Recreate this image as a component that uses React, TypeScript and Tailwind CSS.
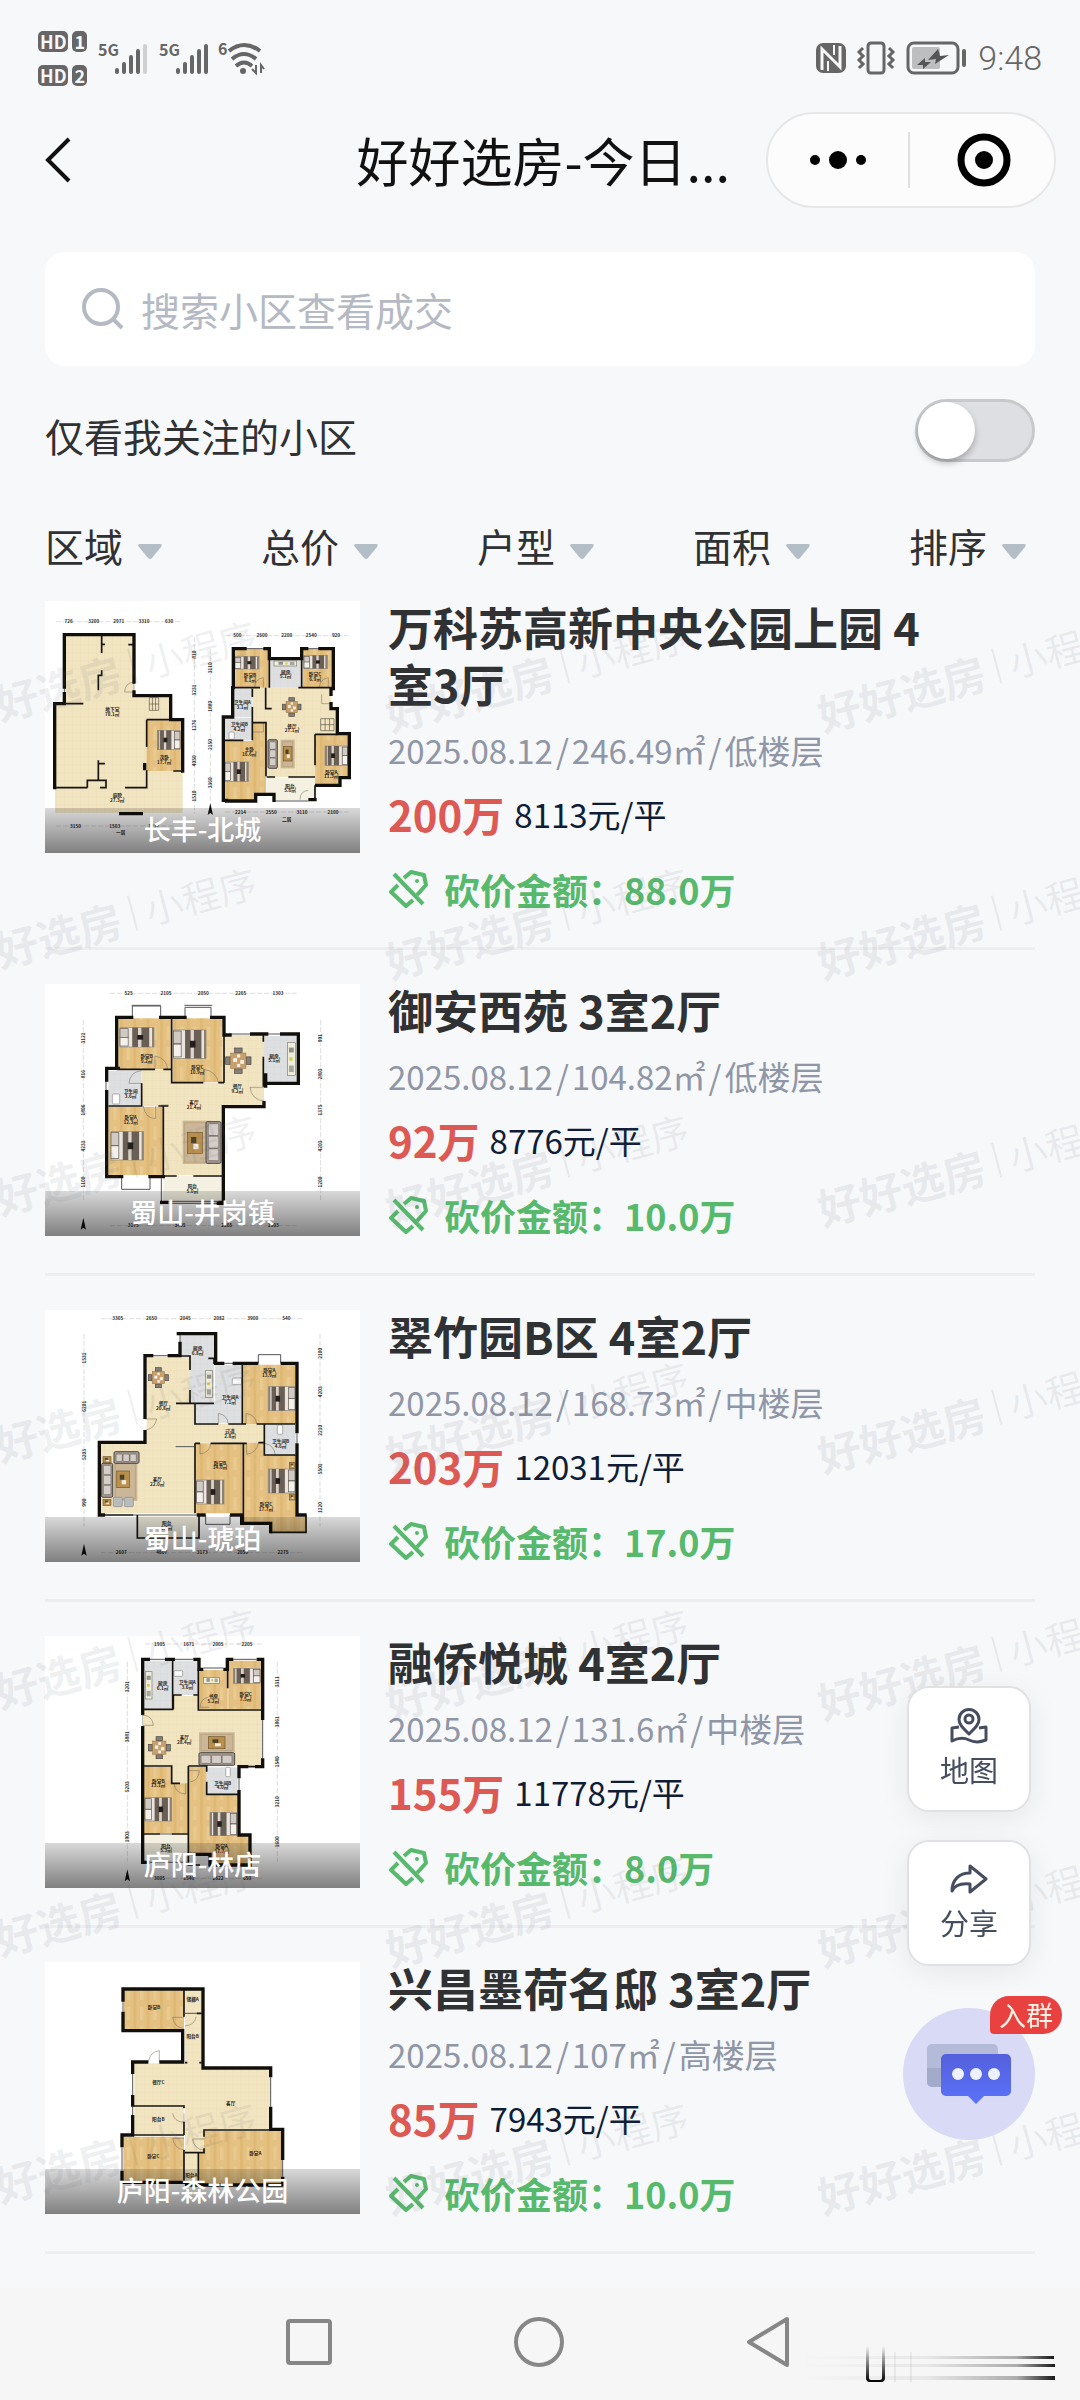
import { useState } from 'react';

type Fill = 'wood' | 'cream' | 'tile' | 'pale';
type Item =
    | ['bed', number, number, number, number, 'l' | 'r']
    | ['rug' | 'sofa' | 'counter' | 'wc' | 'stairs' | 'seat' | 'table', number, number, number, number]
    | ['dining', number, number, number];

interface Plan {
    viewBox: string;
    rooms: [Fill, string][];
    walls: string;
    partitions: string;
    windows: string;
    doors: string;
    items: Item[];
    labels: [number, number, string, string?][];
    // 尺寸标注: 上 / 下的横线, 左 / 右的竖线
    dimsH: [number, number, number, string[]][];
    dimsV: [number, number, number, string[]][];
    north?: [number, number];
}

interface Listing {
    title: string;
    district: string;
    area: string;
    floor: string;
    price: string;
    unit: string;
    cut: string;
    plan: Plan;
}

const fills: Record<Fill, string> = {
    wood: 'url(#wood)',
    cream: 'url(#cream)',
    tile: 'url(#tile)',
    pale: '#f4f1e2',
};

const planBeicheng: Plan = {
    viewBox: '135 62 945 756',
    rooms: [
        ['cream', 'M193 163H402V345H512V418H548V697H165V370H193Z'],
        ['wood', 'M440 420H548V572H440Z'],
        ['cream', 'M758 322H993V385H1012V462H945V590H800V425H758Z'],
        ['wood', 'M700 205H806V322H700Z'],
        ['wood', 'M908 205H1000V322H908Z'],
        ['tile', 'M810 235H905V322H810Z'],
        ['tile', 'M700 325H757V410H700Z'],
        ['tile', 'M675 412H757V480H675Z'],
        ['wood', 'M675 482H757V427H798V640H765V660H675Z'],
        ['wood', 'M945 462H1048V592H1020V612H945Z'],
        ['pale', 'M800 592H945V660H820V640H800Z'],
    ],
    walls: 'M193 320V163H402V305M402 335V346H512V418H548V572M193 340V370H165M164 370V622M362 700H424M434 553V565M700 322V205H735M795 205H808V235H905V205H920M960 205H1000V325H993V342M993 370V385H1012V460H1048V592H1020V615H950M698 322V410H670V660H680M680 662H767V642H822V660M930 658H945',
    partitions: 'M193 370H250M305 163V218M305 192H315M305 270V285H295V330M385 193H402M440 418V500M440 418H512M295 540V600M295 550H315M262 622V600H318V622H300M165 622H262M375 622H440V570M520 572H548M700 322H780M808 235V322M905 235V322M757 325V350M757 380V480M675 480H730M757 427H798V588M797 322V385H815M895 322H1000M945 462V555M945 462H1012M945 615V655M800 590H825M865 590H945',
    windows: 'M735 205H795M920 205H960M820 662H925M193 320V340',
    doors: 'M402 305V335H374Q374 308 402 305M790 322V292Q766 296 764 320M985 322V292Q960 296 958 320M993 370H965V342M757 455H790V427M900 658Q900 632 925 630',
    items: [
        ['bed', 472, 450, 68, 58, 'r'],
        ['stairs', 448, 352, 28, 38],
        ['bed', 705, 228, 72, 38, 'l'],
        ['bed', 912, 225, 70, 40, 'l'],
        ['bed', 675, 545, 70, 58, 'l'],
        ['bed', 975, 497, 68, 58, 'r'],
        ['counter', 822, 242, 68, 15],
        ['dining', 875, 380, 28],
        ['rug', 842, 478, 42, 86],
        ['table', 850, 498, 26, 44],
        ['sofa', 804, 478, 28, 86],
        ['wc', 687, 455, 16, 22],
        ['stairs', 962, 415, 40, 36],
    ],
    labels: [
        [337, 392, '地下室', '78.1㎡'], [493, 537, '次卧', '17.7㎡'], [352, 650, '庭院', '27.3㎡'],
        [750, 290, '卧室B', '8.1㎡'], [857, 280, '厨房', '5.1㎡'], [945, 288, '卧室C', '6.9㎡'],
        [727, 372, '卫生间A', '3.1㎡'], [718, 438, '卫生间B', '4.2㎡'], [876, 442, '餐厅', '27.1㎡'],
        [748, 512, '主卧', '16.6㎡'], [994, 580, '卧室A', '11.3㎡'], [870, 622, '阳台', '5.6㎡'],
        [860, 722, '二层'], [362, 762, '一层'],
    ],
    dimsH: [
        [124, 168, 545, ['726', '3200', '2971', '3310', '630']],
        [166, 675, 1045, ['500', '2600', '2200', '2540', '920']],
        [737, 168, 520, ['3150', '1503', '1237']],
        [695, 675, 1045, ['2214', '2550', '3110', '2100']],
    ],
    dimsV: [
        [583, 170, 700, ['810', '3231', '1276', '4050', '1510']],
        [631, 205, 665, ['3110', '1880', '2150', '3360']],
    ],
    north: [631, 690],
};

const planJinggang: Plan = {
    viewBox: '135 72 945 756',
    rooms: [
        ['wood', 'M355 175H515V327H355Z'],
        ['wood', 'M518 175H668V367H518Z'],
        ['cream', 'M672 225H792V438H672Z'],
        ['tile', 'M792 228H890V370H792Z'],
        ['tile', 'M325 332H425V436H325Z'],
        ['cream', 'M425 328H515V368H672V438H665V645H490V438H425Z'],
        ['wood', 'M325 440H490V645H325Z'],
        ['pale', 'M490 648H667V728H490Z'],
    ],
    walls: 'M350 325V172H395M482 172H555M635 172H672V225H690M755 222H800M845 222H895V370H797M797 345V378M792 428V440H670V730H655M320 360V325H355M320 395V650H365M450 650H490M485 727H500M660 727H672',
    partitions: 'M350 328H465M490 328H515M515 172V368H610M655 368H672M672 225V368M790 225V245M790 290V380M425 370V438H325M475 438H505M490 438V648H530M580 648H670',
    windows: 'M397 172V138H482V172M395 136H482M555 172V142H633V172M553 136H637M365 650V688H450V650M318 360V395M484 655V725M505 724H655M505 730H655M690 222H755M800 222H845',
    doors: 'M465 328V288Q500 295 503 328M612 368V328Q650 335 655 368M425 370H387Q390 335 425 332M430 438Q435 475 467 476V438M793 382H750Q755 420 793 423M483 435H506',
    items: [
        ['bed', 360, 203, 102, 58, 'l'],
        ['bed', 520, 210, 98, 85, 'l'],
        ['bed', 333, 515, 98, 85, 'l'],
        ['rug', 548, 482, 85, 130],
        ['table', 562, 517, 45, 63],
        ['sofa', 618, 485, 45, 125],
        ['dining', 715, 302, 38],
        ['counter', 862, 248, 24, 98],
        ['wc', 337, 402, 22, 30],
    ],
    labels: [
        [440, 294, '卧室B', '9.2㎡'], [592, 327, '卧室C', '10.9㎡'], [822, 293, '厨房', '5.1㎡'],
        [712, 384, '餐厅', '9.2㎡'], [582, 432, '客厅', '21.4㎡'], [392, 400, '卫生间', '3.6㎡'],
        [392, 477, '卧室A', '12.3㎡'], [577, 684, '阳台', '5.0㎡'],
    ],
    dimsH: [
        [100, 330, 890, ['525', '2105', '2050', '2265', '1303']],
        [797, 330, 890, ['3175', '3405', '2265', '1303']],
    ],
    dimsV: [
        [250, 180, 720, ['3121', '816', '1806', '4231', '1100']],
        [962, 180, 720, ['991', '2803', '1375', '4203', '1200']],
    ],
    north: [250, 795],
};

const planHupo: Plan = {
    viewBox: '135 60 945 756',
    rooms: [
        ['tile', 'M540 132H642V340H570V200H540Z'],
        ['cream', 'M440 200H570V340H585V402H793V458H585V670H302V460H440Z'],
        ['tile', 'M645 225H727V400H587V342H645Z'],
        ['wood', 'M730 224H888V402H730Z'],
        ['tile', 'M795 405H887V495H795Z'],
        ['wood', 'M587 460H728V670H587Z'],
        ['wood', 'M732 458H795V495H887V680H915V726H812V700H732Z'],
        ['pale', 'M412 677H597V744H412Z'],
    ],
    walls: 'M435 382V197H455M508 197H540V160M535 131H647V220H668M703 220H770M847 220H891V425M891 465V675H915M435 425V457H298V675H310M595 675H612M695 675H725V700H812V725',
    partitions: 'M540 198H570V240M570 300V340M625 205H642M528 340H642M642 205V222M585 340V402H655M685 402H738M727 225V402M770 402H885M793 402V495H887M585 460H600M632 460H740M775 458H793M585 460V670M730 460V700M300 675H400M412 675V744H597V675M918 675V727H810',
    windows: 'M775 220V194H842V220M617 675V703H690V675M455 197H508M670 220H703M540 131V160M400 675H590M527 470H583M891 430V460',
    doors: 'M435 387H470Q465 415 438 420M655 402V370Q682 375 685 402M738 402V370Q768 375 770 402M600 460V492Q630 488 632 460M740 460V493Q770 488 775 460M795 460Q822 465 826 495',
    items: [
        ['dining', 475, 263, 30],
        ['counter', 616, 242, 22, 80],
        ['wc', 697, 264, 28, 20],
        ['wc', 832, 405, 16, 28],
        ['bed', 805, 290, 80, 72, 'r'],
        ['bed', 805, 537, 80, 72, 'r'],
        ['bed', 590, 570, 82, 72, 'l'],
        ['rug', 340, 515, 72, 118],
        ['table', 350, 543, 38, 50],
        ['sofa', 342, 485, 75, 35],
        ['sofa', 305, 520, 33, 102],
        ['seat', 340, 622, 27, 28],
        ['seat', 373, 622, 27, 28],
        ['table', 309, 500, 24, 18],
        ['table', 309, 628, 24, 18],
        ['table', 868, 517, 17, 18],
        ['table', 868, 612, 17, 18],
    ],
    labels: [
        [593, 180, '厨房', '6.8㎡'], [490, 346, '餐厅', '20.8㎡'], [690, 328, '卫生间A', '7.1㎡'],
        [808, 247, '卧室A', '13.9㎡'], [690, 430, '过道', '2.8㎡'], [842, 460, '卫生间B', '4.6㎡'],
        [472, 574, '客厅', '22.0㎡'], [660, 524, '卧室B', '14.0㎡'], [798, 648, '卧室C', '17.7㎡'],
        [500, 706, '阳台', '6.0㎡'],
    ],
    dimsH: [
        [86, 303, 910, ['3305', '2650', '2045', '2082', '3900', '540']],
        [788, 303, 910, ['2607', '4607', '3173', '2050', '2275']],
    ],
    dimsV: [
        [252, 132, 710, ['1531', '6201', '5203', '990']],
        [960, 132, 710, ['2100', '4203', '2210', '5501', '1220']],
    ],
    north: [252, 783],
};

const planLindian: Plan = {
    viewBox: '135 48 945 756',
    rooms: [
        ['tile', 'M430 122H518V268H430Z'],
        ['tile', 'M522 122H594V225H522Z'],
        ['wood', 'M597 150H683V268H597Z'],
        ['wood', 'M685 122H785V268H685Z'],
        ['cream', 'M430 270H520V228H595V270H787V438H565V490H515V438H430Z'],
        ['wood', 'M430 440H515V490H565V640H430Z'],
        ['wood', 'M567 440H620V523H715V648H750V735H630V700H567Z'],
        ['tile', 'M620 442H713V522H620Z'],
        ['pale', 'M430 645H563V728H430Z'],
        ['tile', 'M567 706H628V735H567Z'],
    ],
    walls: 'M428 280V118H445M500 118H520M585 118H597V148H605M675 148H682V118H695M775 118H788V295M788 420V440H770M740 440H717V470M717 515V645H750V735H630V703H567M428 323V727H445',
    partitions: 'M518 120V268H430M520 225V268M520 225H545M580 225H595M595 145V270H788M683 150V205M430 438H515V490H540M565 438H620V455M620 485V523H715M565 438V700M430 642H480M515 642H565V735H600M765 440H720',
    windows: 'M450 118H495M525 118H580M610 144H670M700 118H770M788 300V415M717 475V510M480 642H515M450 727H563',
    doors: 'M428 285V316H460Q458 288 428 285M600 262Q602 235 625 232M600 262H628M567 452H598Q596 482 570 486M557 490V522Q525 520 522 490',
    items: [
        ['counter', 436, 155, 20, 82],
        ['wc', 522, 152, 26, 17],
        ['counter', 610, 172, 48, 18],
        ['bed', 700, 145, 80, 45, 'r'],
        ['rug', 597, 337, 107, 60],
        ['table', 625, 350, 50, 36],
        ['sofa', 597, 398, 107, 38],
        ['dining', 478, 383, 33],
        ['wc', 677, 442, 14, 28],
        ['bed', 435, 533, 80, 70, 'l'],
        ['bed', 630, 577, 80, 70, 'r'],
    ],
    labels: [
        [488, 195, '厨房', '6.1㎡'], [562, 192, '卫生间A', '3.6㎡'], [640, 235, '书房', '5.2㎡'],
        [737, 228, '卧室C', '7.5㎡'], [553, 357, '客厅', '28.4㎡'], [475, 488, '卧室B', '13.1㎡'],
        [668, 494, '卫生间B', '4.0㎡'], [665, 684, '卧室A', '17.7㎡'], [498, 683, '阳台', '5.3㎡'],
    ],
    dimsH: [
        [72, 435, 785, ['1905', '1671', '2005', '2205']],
        [775, 435, 785, ['3005', '1540', '2622', '650']],
    ],
    dimsV: [
        [382, 125, 725, ['3201', '3881', '5203', '1903']],
        [832, 125, 725, ['3311', '3861', '1540', '3210', '1600']],
    ],
    north: [382, 770],
};

const planForest: Plan = {
    viewBox: '135 66 945 756',
    rooms: [
        ['wood', 'M372 150H552V267H372Z'],
        ['cream', 'M555 150H605V372H555Z'],
        ['cream', 'M403 370H605V388H812V570H612V638H555V500H403Z'],
        ['cream', 'M403 502H551V584H403Z'],
        ['wood', 'M370 590H552V726H370Z'],
        ['wood', 'M597 640H612V572H846V732H597Z'],
        ['cream', 'M555 640H593V730H555Z'],
    ],
    walls: 'M369 180V147H609V384H812V407M369 220V272H548V366H483M440 366H398V397M398 470V495M398 530V578M812 505V568H848V655M366 617V585H398M366 697V727H560M560 735H848V715',
    partitions: 'M552 150V230M590 220H605M400 498H552V505M552 545V585M400 585H552M552 630V725M555 638H612V625M612 590V570H812M595 640V725M555 368H562M598 368H605',
    windows: 'M369 185V215M398 402V465M398 500V525M812 412V500M366 622V692M848 660V710M555 220H590',
    doors: 'M445 366Q450 335 478 332V366M552 232H518Q522 262 550 265M555 258Q585 255 588 230M518 520Q522 545 552 547V520M552 595H518Q522 625 552 630M612 597H578Q582 628 612 630',
    items: [],
    labels: [
        [462, 207, '卧室B'], [578, 183, '储藏A'], [578, 293, '阳台B'], [475, 433, '餐厅C'],
        [692, 496, '客厅'], [475, 542, '阳台B'], [460, 654, '卧室C'], [766, 645, '卧室A'], [574, 710, '阳台A'],
    ],
    dimsH: [],
    dimsV: [],
};

const listings: Listing[] = [
    { title: '万科苏高新中央公园上园 4室3厅', district: '长丰-北城', area: '246.49㎡', floor: '低楼层', price: '200万', unit: '8113元/平', cut: '88.0万', plan: planBeicheng },
    { title: '御安西苑 3室2厅', district: '蜀山-井岗镇', area: '104.82㎡', floor: '低楼层', price: '92万', unit: '8776元/平', cut: '10.0万', plan: planJinggang },
    { title: '翠竹园B区 4室2厅', district: '蜀山-琥珀', area: '168.73㎡', floor: '中楼层', price: '203万', unit: '12031元/平', cut: '17.0万', plan: planHupo },
    { title: '融侨悦城 4室2厅', district: '庐阳-林店', area: '131.6㎡', floor: '中楼层', price: '155万', unit: '11778元/平', cut: '8.0万', plan: planLindian },
    { title: '兴昌墨荷名邸 3室2厅', district: '庐阳-森林公园', area: '107㎡', floor: '高楼层', price: '85万', unit: '7943元/平', cut: '10.0万', plan: planForest },
];

const filters = ['区域', '总价', '户型', '面积', '排序'];

// 所有户型图共用的填充纹理
function PlanPatterns() {
    return (
        <svg className="absolute h-0 w-0" aria-hidden="true">
            <defs>
                <pattern id="wood" width="40" height="60" patternUnits="userSpaceOnUse">
                    <rect width="40" height="60" fill="#e4c182" />
                    <rect width="9" height="60" fill="#dfb974" />
                    <rect x="20" y="20" width="10" height="40" fill="#e9ca8f" />
                </pattern>
                <pattern id="cream" width="24" height="24" patternUnits="userSpaceOnUse">
                    <rect width="24" height="24" fill="#f1e4c0" />
                    <path d="M0 0H24M0 0V24" stroke="#ebdcb4" strokeWidth="2" />
                </pattern>
                <pattern id="tile" width="20" height="20" patternUnits="userSpaceOnUse">
                    <rect width="20" height="20" fill="#dedfe0" />
                    <path d="M0 0H20M0 0V20" stroke="#d3d5d6" strokeWidth="2" />
                </pattern>
            </defs>
        </svg>
    );
}

function Furniture({ item }: { item: Item }) {
    if (item[0] === 'dining') {
        const [, x, y, r] = item;
        return (
            <g>
                <g fill="#857f78" stroke="#4a4540" strokeWidth="2">
                    <rect x={x - r * 0.3} y={y - r} width={r * 0.6} height={r * 0.35} />
                    <rect x={x - r * 0.3} y={y + r * 0.65} width={r * 0.6} height={r * 0.35} />
                    <rect x={x - r} y={y - r * 0.3} width={r * 0.35} height={r * 0.6} />
                    <rect x={x + r * 0.65} y={y - r * 0.3} width={r * 0.35} height={r * 0.6} />
                </g>
                <rect x={x - r * 0.6} y={y - r * 0.6} width={r * 1.2} height={r * 1.2} fill="#c9a06a" stroke="#8a6a40" strokeWidth="1.5" />
                <g fill="#f4efe6">
                    <rect x={x - r * 0.4} y={y - r * 0.2} width={r * 0.3} height={r * 0.3} />
                    <rect x={x + r * 0.15} y={y - r * 0.05} width={r * 0.3} height={r * 0.3} />
                    <rect x={x - r * 0.1} y={y - r * 0.5} width={r * 0.25} height={r * 0.25} />
                    <rect x={x - r * 0.1} y={y + r * 0.25} width={r * 0.25} height={r * 0.25} />
                </g>
            </g>
        );
    }
    const [kind, x, y, w, h] = item;
    if (kind === 'bed') {
        const left = item[5] === 'l';
        const pillow = left ? x : x + w * 0.76;
        const blanket = left ? x + w * 0.36 : x + w * 0.12;
        return (
            <g>
                <rect x={x} y={y} width={w} height={h} fill="#e9e4de" stroke="#8d8378" strokeWidth="2" />
                <rect x={pillow} y={y + 3} width={w * 0.24} height={h * 0.45} fill="#cfcac4" stroke="#5b544d" strokeWidth="2" />
                <rect x={pillow} y={y + h * 0.5} width={w * 0.24} height={h * 0.45} fill="#f4f1ed" stroke="#5b544d" strokeWidth="2" />
                <rect x={blanket} y={y} width={w * 0.5} height={h} fill="#6a5f55" />
                <rect x={blanket + w * 0.17} y={y} width={w * 0.1} height={h} fill="#ddd5cb" />
                <rect x={blanket + w * 0.15} y={y + h * 0.38} width={w * 0.17} height={h * 0.24} fill="#221e1b" />
                <rect x={left ? x + w - 6 : x} y={y} width="6" height={h} fill="#8b8177" />
            </g>
        );
    }
    if (kind === 'rug') {
        return (
            <g>
                <rect x={x} y={y} width={w} height={h} fill="#cbb797" />
                <rect x={x + 6} y={y + 6} width={w - 12} height={h - 12} fill="none" stroke="#baa482" strokeWidth="3" />
            </g>
        );
    }
    if (kind === 'table') {
        return (
            <g>
                <rect x={x} y={y} width={w} height={h} fill="#b98f4d" stroke="#6f5730" strokeWidth="2" />
                <rect x={x + w * 0.25} y={y + h * 0.22} width={w * 0.35} height={h * 0.3} fill="#4b4227" />
                <rect x={x + w * 0.4} y={y + h * 0.55} width={w * 0.35} height={h * 0.25} fill="#f3ece1" />
            </g>
        );
    }
    if (kind === 'sofa') {
        const tall = h > w;
        return (
            <g>
                <rect x={x} y={y} width={w} height={h} rx="4" fill="#a39a92" stroke="#4f4943" strokeWidth="3" />
                {[0, 1, 2].map((n) => (
                    <rect
                        key={n}
                        x={tall ? x + w * 0.15 : x + 6 + (n * (w - 12)) / 3}
                        y={tall ? y + 6 + (n * (h - 12)) / 3 : y + h * 0.2}
                        width={tall ? w * 0.7 : (w - 18) / 3}
                        height={tall ? (h - 18) / 3 : h * 0.65}
                        rx="3"
                        fill="#d4cdc8"
                        stroke="#6b645e"
                        strokeWidth="2"
                    />
                ))}
            </g>
        );
    }
    if (kind === 'counter') {
        const tall = h > w;
        return (
            <g>
                <rect x={x} y={y} width={w} height={h} fill="#efeedd" stroke="#7d7b6c" strokeWidth="2" />
                <rect x={x + w * 0.2} y={y + h * 0.15} width={tall ? w * 0.6 : w * 0.2} height={tall ? h * 0.15 : h * 0.6} fill="#8f9088" />
                <rect x={x + w * (tall ? 0.25 : 0.5)} y={y + h * (tall ? 0.45 : 0.3)} width={tall ? w * 0.4 : w * 0.1} height={tall ? h * 0.1 : h * 0.4} fill="#d6c84f" />
                <rect x={x + w * (tall ? 0.2 : 0.7)} y={y + h * (tall ? 0.7 : 0.2)} width={tall ? w * 0.6 : w * 0.2} height={tall ? h * 0.2 : h * 0.6} fill="#a5a69d" />
            </g>
        );
    }
    if (kind === 'stairs') {
        return (
            <path
                d={`M${x} ${y}H${x + w}V${y + h}H${x}ZM${x} ${y + h / 2}H${x + w}M${x + w / 3} ${y}V${y + h}M${x + (w * 2) / 3} ${y}V${y + h}`}
                fill="none"
                stroke="#5d564a"
                strokeWidth="2"
            />
        );
    }
    return <rect x={x} y={y} width={w} height={h} rx="3" fill={kind === 'wc' ? '#fbfbfb' : '#b9bcbc'} stroke="#8b8d8d" strokeWidth="2" />;
}

function FloorPlan({ plan, name }: { plan: Plan; name: string }) {
    return (
        <svg viewBox={plan.viewBox} className="block w-full" role="img" aria-label={`${name} 户型图`}>
            {plan.rooms.map(([fill, d]) => (
                <path key={d} d={d} fill={fills[fill]} />
            ))}
            {plan.items.map((item, i) => (
                <Furniture key={i} item={item} />
            ))}
            <path d={plan.doors} fill="none" stroke="#6b675c" strokeWidth="1.5" />
            <path d={plan.windows} fill="none" stroke="#55565c" strokeWidth="3" />
            <path d={plan.partitions} fill="none" stroke="#15140f" strokeWidth="5" />
            <path d={plan.walls} fill="none" stroke="#100f0b" strokeWidth="10" strokeLinecap="square" />
            <g fontSize="14" fontWeight="bold" textAnchor="middle" fill="#2a2721">
                {plan.labels.map(([x, y, room, size], i) => (
                    <text key={i} x={x} y={y}>
                        {room}
                        {size && <tspan x={x} dy="14">{size}</tspan>}
                    </text>
                ))}
            </g>
            <g fontSize="14" fontWeight="bold" textAnchor="middle" fill="#2f2f2f">
                {plan.dimsH.map(([y, x1, x2, nums]) => (
                    <g key={y}>
                        <path d={`M${x1} ${y}H${x2}`} stroke="#9b9b9b" strokeDasharray="16 5" />
                        {nums.map((n, i) => (
                            <text key={i} x={x1 + ((x2 - x1) * (i + 0.5)) / nums.length} y={y + 5}>{n}</text>
                        ))}
                    </g>
                ))}
                {plan.dimsV.map(([x, y1, y2, nums]) => (
                    <g key={x}>
                        <path d={`M${x} ${y1}V${y2}`} stroke="#9b9b9b" strokeDasharray="16 5" />
                        {nums.map((n, i) => {
                            const y = y1 + ((y2 - y1) * (i + 0.5)) / nums.length;
                            return (
                                <text key={i} x={x} y={y + 5} transform={`rotate(-90 ${x} ${y})`}>{n}</text>
                            );
                        })}
                    </g>
                ))}
            </g>
            {plan.north && (
                <path
                    d={`M${plan.north[0]} ${plan.north[1] - 22}l8 36l-8 -6l-8 6Z`}
                    fill="#111"
                />
            )}
        </svg>
    );
}

function HdBadge({ slot }: { slot: string }) {
    return (
        <div className="flex gap-1 text-[18px] leading-[21px] font-bold text-[#f7f8fa]">
            <span className="rounded-[5px] bg-[#666] px-[2px]">HD</span>
            <span className="rounded-[5px] bg-[#666] px-[2px]">{slot}</span>
        </div>
    );
}

function Signal({ weak }: { weak?: boolean }) {
    return (
        <svg width="50" height="34" viewBox="0 0 50 34" aria-label="5G" className="overflow-visible">
            <text x="0" y="15" fontSize="16" fontWeight="bold" fill="#666">5G</text>
            <g strokeWidth="4" strokeLinecap="round" stroke="#666">
                <path d="M19 29V31M26 23V31M33 16V31M40 10V31" />
                <path d="M47 5V31" stroke={weak ? '#cfd0d2' : '#666'} />
            </g>
        </svg>
    );
}

function StatusBar() {
    return (
        <div className="flex h-[112px] items-center justify-between pt-1 pr-[38px] pl-[38px] text-[#666]">
            <div className="flex items-center gap-[11px]">
                <div className="flex flex-col gap-[13px]">
                    <HdBadge slot="1" />
                    <HdBadge slot="2" />
                </div>
                <Signal weak />
                <Signal />
                <svg width="46" height="34" viewBox="0 0 46 34" fill="none" stroke="#666" strokeWidth="4" className="overflow-visible">
                    <text x="-2" y="14" fontSize="16" fontWeight="bold" fill="#666" stroke="none">6</text>
                    <path d="M9 10Q24 -2 40 10" />
                    <path d="M12 18Q24 8 36 18" />
                    <path d="M16 25Q24 18 32 25" />
                    <circle cx="23" cy="30" r="3" fill="#666" stroke="none" />
                    <path d="M36 24V32L32 28M41 32V24L44 28" strokeWidth="2" />
                </svg>
            </div>
            <div className="flex items-center gap-[10px]">
                <svg width="30" height="32" viewBox="0 0 30 32">
                    <rect x="0" y="1" width="30" height="30" rx="7" fill="#666" />
                    <path d="M6 28V7L24 25V4" fill="none" stroke="#f7f8fa" strokeWidth="3" />
                    <path d="M12 19V29M18 3V13" stroke="#f7f8fa" strokeWidth="2" />
                </svg>
                <svg width="40" height="34" viewBox="0 0 40 34" fill="none" stroke="#666" strokeWidth="3">
                    <rect x="12" y="2" width="16" height="30" rx="3" />
                    <path d="M7 7L3 11L7 15L3 19L7 23L3 27M33 7L37 11L33 15L37 19L33 23L37 27" />
                </svg>
                <svg width="62" height="34" viewBox="0 0 62 34">
                    <rect x="2" y="2" width="50" height="30" rx="6" fill="none" stroke="#666" strokeWidth="3" />
                    <rect x="6" y="6" width="28" height="22" rx="2" fill="#bdbec0" />
                    <path d="M32 8L22 19L30 18L29 23L43 14L34 15Z" fill="#555" />
                    <path d="M19 17L11 24L17 24L17 28L25 21L19 21Z" fill="#555" />
                    <path d="M58 10V24" stroke="#666" strokeWidth="4" strokeLinecap="round" />
                </svg>
                <span className="font-['Roboto',sans-serif] text-[34px] leading-10 font-light">9:48</span>
            </div>
        </div>
    );
}

function TitleBar() {
    return (
        <header className="flex h-[96px] items-center pr-6 pl-11">
            <button type="button" aria-label="返回" className="flex-1">
                <svg width="28" height="48" viewBox="0 0 28 48" fill="none" stroke="#111" strokeWidth="4">
                    <path d="M25 3L4 24L25 45" />
                </svg>
            </button>
            <h1 className="pr-9 text-[52px] leading-[64px] text-[#111]">好好选房-今日...</h1>
            <div className="flex h-[96px] w-[290px] items-center rounded-full border-2 border-[#e6e7e9] bg-[#fcfcfd]">
                <button type="button" aria-label="更多" className="flex h-full flex-1 items-center justify-center">
                    <svg width="60" height="20" viewBox="0 0 60 20">
                        <circle cx="7" cy="10" r="5" />
                        <circle cx="30" cy="10" r="9" />
                        <circle cx="53" cy="10" r="5" />
                    </svg>
                </button>
                <span className="h-14 w-[2px] bg-[#e0e0e2]" />
                <button type="button" aria-label="关闭" className="flex h-full flex-1 items-center justify-center pl-1">
                    <svg width="54" height="54" viewBox="0 0 54 54">
                        <circle cx="27" cy="27" r="23" fill="none" stroke="#000" strokeWidth="7" />
                        <circle cx="27" cy="27" r="9" />
                    </svg>
                </button>
            </div>
        </header>
    );
}

function CutIcon() {
    return (
        <svg width="40" height="40" viewBox="0 0 40 40" fill="none" stroke="#57b96c" strokeWidth="4" strokeLinejoin="round">
            <path d="M6 5L35 35" />
            <path d="M16 9L23 3L36 6L38 16L29 26" />
            <path d="M10 16L3 23L18 37L25 31" />
            <circle cx="29" cy="12" r="2" fill="#57b96c" stroke="none" />
        </svg>
    );
}

function ListingCard({ item }: { item: Listing }) {
    return (
        <li className="mb-[34px] flex items-start gap-7 border-b-[3px] border-[#edeef0] pb-[31px]">
            <a href="#detail" className="relative block w-[315px] shrink-0 bg-white">
                <FloorPlan plan={item.plan} name={item.title} />
                <span className="absolute inset-x-0 bottom-0 h-[45px] bg-linear-to-b from-black/15 to-black/50 text-center text-[27px] leading-[42px] font-medium text-white">
                    {item.district}
                </span>
            </a>
            <div className="-mt-[3px] flex-1 pr-20">
                <h2 className="text-[45px] leading-[57px] font-bold text-[#303133]">{item.title}</h2>
                <p className="mt-[14px] flex gap-[3px] text-[33px] leading-[48px] text-[#8f96a6]">
                    <span>2025.08.12</span>
                    <span>/</span>
                    <span>{item.area}</span>
                    <span>/</span>
                    <span>{item.floor}</span>
                </p>
                <p className="mt-3 flex items-center gap-[10px] leading-[56px]">
                    <strong className="text-[42px] font-bold text-[#dd5a54]">{item.price}</strong>
                    <span className="text-[33px] text-[#101d37]">{item.unit}</span>
                </p>
                <p className="mt-5 flex items-center gap-4 text-[36px] leading-[54px] font-bold text-[#57b96c]">
                    <CutIcon />
                    <span>砍价金额：{item.cut}</span>
                </p>
            </div>
        </li>
    );
}

function Watermark() {
    return (
        <div className="pointer-events-none absolute inset-0 overflow-hidden select-none" aria-hidden="true">
            {Array.from({ length: 7 }, (_, row) => (
                <div key={row} className="-ml-[46px] flex h-[247px] items-center">
                    {Array.from({ length: 3 }, (_, col) => (
                        <div key={col} className="w-[432px] shrink-0">
                            <div className="flex w-max origin-left -rotate-[15deg] items-center gap-3 text-[#5b6070]/10">
                                <span className="text-[43px] leading-[50px] font-bold">好好选房</span>
                                <span className="h-9 w-[2px] bg-[#5b6070]/10" />
                                <span className="text-[38px] leading-[50px]">小程序</span>
                            </div>
                        </div>
                    ))}
                </div>
            ))}
        </div>
    );
}

function FloatingActions() {
    const card = 'flex h-[126px] w-[124px] flex-col items-center justify-center gap-1 rounded-[22px] border-2 border-[#e0e1e5] bg-white text-[29px] leading-[42px] text-[#454d5e] shadow-[0_6px_30px_rgba(0,0,0,0.07)]';
    return (
        <div className="fixed right-[45px] bottom-[260px] flex w-[132px] flex-col items-center">
            <button type="button" className={card}>
                <svg width="38" height="36" viewBox="0 0 38 36" fill="none" stroke="#454d5e" strokeWidth="3" strokeLinejoin="round">
                    <path d="M19 26C12 19 9 16 9 11.500A10 10 0 0 1 29 11.500C29 16 26 19 19 26Z" />
                    <circle cx="19" cy="11" r="4" />
                    <path d="M9 19L2 20V33C8 30 13 29 19 32C25 35 31 34 36 32V19L29 20" />
                </svg>
                地图
            </button>
            <button type="button" className={`${card} mt-7`}>
                <svg width="38" height="34" viewBox="0 0 38 34" fill="none" stroke="#454d5e" strokeWidth="3" strokeLinejoin="round">
                    <path d="M20 3L36 16L20 29V21C11 20 5 22 2 28C2 17 9 10 20 10Z" />
                </svg>
                分享
            </button>
            <a href="#group" aria-label="入群" className="relative mt-[42px] flex size-[132px] items-center justify-center rounded-full bg-[#d8daf6]">
                <svg width="86" height="62" viewBox="0 0 86 62">
                    <defs>
                        <linearGradient id="bubble" x1="0" y1="0" x2="0" y2="1">
                            <stop offset="0" stopColor="#5560dc" />
                            <stop offset="1" stopColor="#5a72fa" />
                        </linearGradient>
                    </defs>
                    <rect x="1" y="1" width="71" height="43" rx="5" fill="#b4bbd9" />
                    <path d="M1 25H15V44H6A5 5 0 0 1 1 39Z" fill="#a3abcb" />
                    <path d="M20 11H80A5 5 0 0 1 85 16V48A5 5 0 0 1 80 53H58L50 61L42 53H20A5 5 0 0 1 15 48V16A5 5 0 0 1 20 11Z" fill="url(#bubble)" />
                    <g fill="#eef1ff">
                        <circle cx="32" cy="31" r="6" />
                        <circle cx="50" cy="31" r="6" />
                        <circle cx="68" cy="31" r="6" />
                    </g>
                </svg>
                <span className="absolute -top-3 -right-[27px] rounded-[19px] rounded-bl-[4px] bg-[#e8413f] px-[9px] text-[27px] leading-[38px] whitespace-nowrap text-[#fff3e6]">
                    入群
                </span>
            </a>
        </div>
    );
}

function NavBar() {
    return (
        <nav className="relative mt-auto flex h-[116px] items-center justify-center gap-[182px] bg-[#f6f6f6] pr-1 pb-2">
            <button type="button" aria-label="最近任务">
                <svg width="46" height="46" viewBox="0 0 46 46" fill="none" stroke="#878787" strokeWidth="4">
                    <rect x="2" y="2" width="42" height="42" rx="2" />
                </svg>
            </button>
            <button type="button" aria-label="主页">
                <svg width="50" height="50" viewBox="0 0 50 50" fill="none" stroke="#878787" strokeWidth="4">
                    <circle cx="25" cy="25" r="23" />
                </svg>
            </button>
            <button type="button" aria-label="返回上一级">
                <svg width="44" height="52" viewBox="0 0 44 52" fill="none" stroke="#878787" strokeWidth="4" strokeLinejoin="round">
                    <path d="M41 3V49L3 26Z" />
                </svg>
            </button>
            <svg width="256" height="40" viewBox="0 0 256 40" className="absolute right-6 bottom-5" aria-hidden="true">
                <defs>
                    <linearGradient id="streak" x1="0" x2="1" y1="0" y2="0">
                        <stop offset="0" stopColor="#000" stopOpacity="0" />
                        <stop offset="0.5" stopColor="#000" stopOpacity="0.06" />
                        <stop offset="0.85" stopColor="#000" stopOpacity="0.3" />
                        <stop offset="1" stopColor="#000" stopOpacity="0.9" />
                    </linearGradient>
                    <linearGradient id="drip" x1="0" x2="0" y1="0" y2="1">
                        <stop offset="0" stopColor="#000" stopOpacity="0" />
                        <stop offset="1" stopColor="#000" />
                    </linearGradient>
                </defs>
                <g fill="url(#streak)">
                    <rect x="0" y="12" width="254" height="3" />
                    <rect x="0" y="20" width="255" height="3" />
                    <rect x="0" y="32" width="255" height="4" />
                </g>
                <path d="M66 2H69V34Q69 36 71 36H80Q82 36 82 34V2H85V34Q85 38 81 38H70Q66 38 66 34Z" fill="url(#drip)" />
                <path d="M95 8V38M111 8V38" stroke="#000" strokeOpacity="0.05" strokeWidth="2" />
            </svg>
        </nav>
    );
}

export default function App() {
    const [onlyFollowed, setOnlyFollowed] = useState(false);

    return (
        <div className="flex min-h-screen flex-col bg-[#f7f8fa] font-['Noto_Sans_CJK_SC',sans-serif] text-[#303133]">
            <PlanPatterns />
            <StatusBar />
            <TitleBar />

            <main className="flex flex-col">
                <label className="mx-[45px] mt-11 flex h-[114px] items-center gap-4 rounded-[20px] bg-white pl-9">
                    <svg width="44" height="44" viewBox="0 0 44 44" fill="none" stroke="#b4b9c3" strokeWidth="4">
                        <circle cx="20" cy="20" r="17" />
                        <path d="M32 32L41 41" />
                    </svg>
                    <input
                        type="text"
                        aria-label="搜索小区"
                        placeholder="搜索小区查看成交"
                        className="flex-1 bg-transparent text-[39px] leading-[56px] outline-none placeholder:text-[#b4b9c3]"
                    />
                </label>

                <label className="mx-[45px] mt-[33px] flex items-start justify-between">
                    <span className="pt-2 text-[39px] leading-[56px]">仅看我关注的小区</span>
                    <input
                        type="checkbox"
                        role="switch"
                        checked={onlyFollowed}
                        onChange={(e) => setOnlyFollowed(e.target.checked)}
                        className="peer sr-only"
                    />
                    <span className="flex h-[63px] w-[120px] rounded-full border-[3px] border-[#c8c9cc] bg-[#dedfe3] peer-checked:justify-end peer-checked:bg-[#57b96c]">
                        <span className="size-[57px] rounded-full bg-white shadow-[0_4px_6px_rgba(0,0,0,0.25)]" />
                    </span>
                </label>

                <div className="mt-[54px] grid grid-cols-5">
                    {filters.map((name) => (
                        <label key={name} className="flex items-center gap-[14px] pl-[45px]">
                            <select aria-label={name} className="appearance-none bg-transparent text-[39px] leading-[56px] outline-none">
                                <option>{name}</option>
                            </select>
                            <svg width="24" height="15" viewBox="0 0 24 15" className="mt-3">
                                <path d="M2 0H22Q25 0 23 3L14 14Q12 16 10 14L1 3Q-1 0 2 0Z" fill="#b3bec7" />
                            </svg>
                        </label>
                    ))}
                </div>

                <section className="relative mt-[17px] px-[45px] pt-[11px]">
                    <ul>
                        {listings.map((item) => (
                            <ListingCard key={item.title} item={item} />
                        ))}
                    </ul>
                    <Watermark />
                </section>
            </main>

            <FloatingActions />
            <NavBar />
        </div>
    );
}
